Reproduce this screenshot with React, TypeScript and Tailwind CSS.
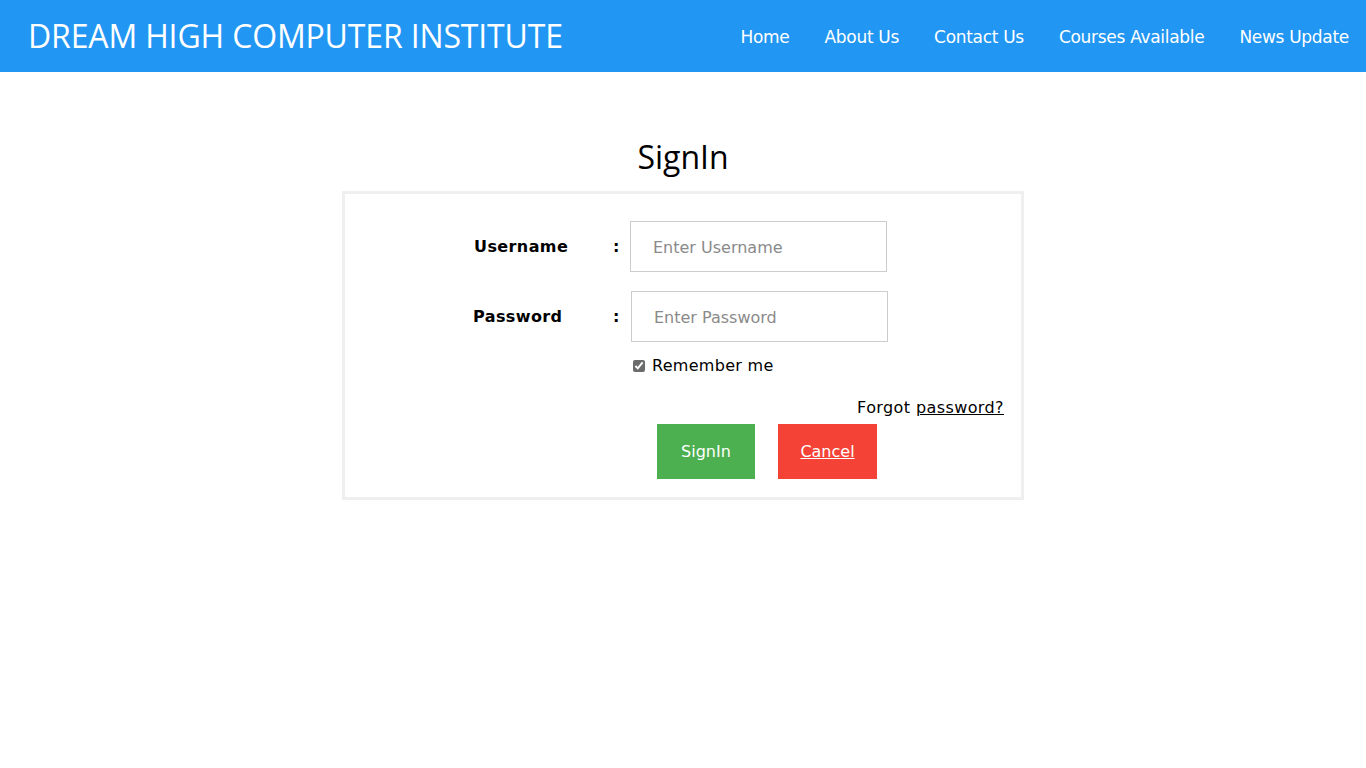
import React from 'react';

const navLinks = ['Home', 'About Us', 'Contact Us', 'Courses Available', 'News Update'];

export default function App() {
  return (
    <div className="min-h-screen bg-white">
      <header className="h-[72px] bg-[#2196f3] flex items-center justify-between pl-[28px] pr-[17px]">
        <h1 className="text-white text-[32px] font-['Open_Sans',sans-serif] tracking-[-0.15px]">
          DREAM HIGH COMPUTER INSTITUTE
        </h1>
        <nav className="flex items-center gap-[35px] pt-[3px] font-['DejaVu_Sans',sans-serif] text-[17px] text-white">
          {navLinks.map((link) => (
            <a key={link} href="#" className="tracking-[-0.3px]">
              {link}
            </a>
          ))}
        </nav>
      </header>

      <main className="flex flex-col items-center pt-[64px]">
        <h2 className="text-[32px] text-black font-['Open_Sans',sans-serif] leading-[42px] mb-[13px]">SignIn</h2>

        <div className="w-[682px] border-[3px] border-[#efefef] pt-[27px] pb-[18px] font-['DejaVu_Sans',sans-serif]">
          <div className="flex items-center pl-[129px]">
            <label className="w-[139px] font-bold text-[16px] text-black tracking-[0.4px]">Username</label>
            <span className="w-[17px] font-bold text-[16px]">:</span>
            <input
              type="text"
              placeholder="Enter Username"
              className="w-[257px] h-[51px] border border-[#cccccc] px-[22px] pt-[2px] text-[16px] placeholder:text-[#8a8a8a] outline-none"
            />
          </div>

          <div className="flex items-center pl-[128px] mt-[19px]">
            <label className="w-[140px] font-bold text-[16px] text-black tracking-[0.4px]">Password</label>
            <span className="w-[18px] font-bold text-[16px]">:</span>
            <input
              type="password"
              placeholder="Enter Password"
              className="w-[257px] h-[51px] border border-[#cccccc] px-[22px] pt-[2px] text-[16px] placeholder:text-[#8a8a8a] outline-none"
            />
          </div>

          <div className="flex items-center pl-[288px] mt-[12px]">
            <input type="checkbox" defaultChecked className="w-[12px] h-[12px] accent-[#6b6b6b]" />
            <span className="ml-[7px] text-[16px] text-black tracking-[0.3px]">Remember me</span>
          </div>

          <div className="flex justify-end pr-[17px] mt-[18px] text-[16px] text-black">
            <span className="tracking-[0.4px]">
              Forgot <a href="#" className="underline">password?</a>
            </span>
          </div>

          <div className="flex pl-[312px] gap-[23px] mt-[4px]">
            <button className="w-[98px] h-[55px] bg-[#4caf50] text-white text-[16px]">SignIn</button>
            <button className="w-[99px] h-[55px] bg-[#f44336] text-white text-[16px] underline">Cancel</button>
          </div>
        </div>
      </main>
    </div>
  );
}
